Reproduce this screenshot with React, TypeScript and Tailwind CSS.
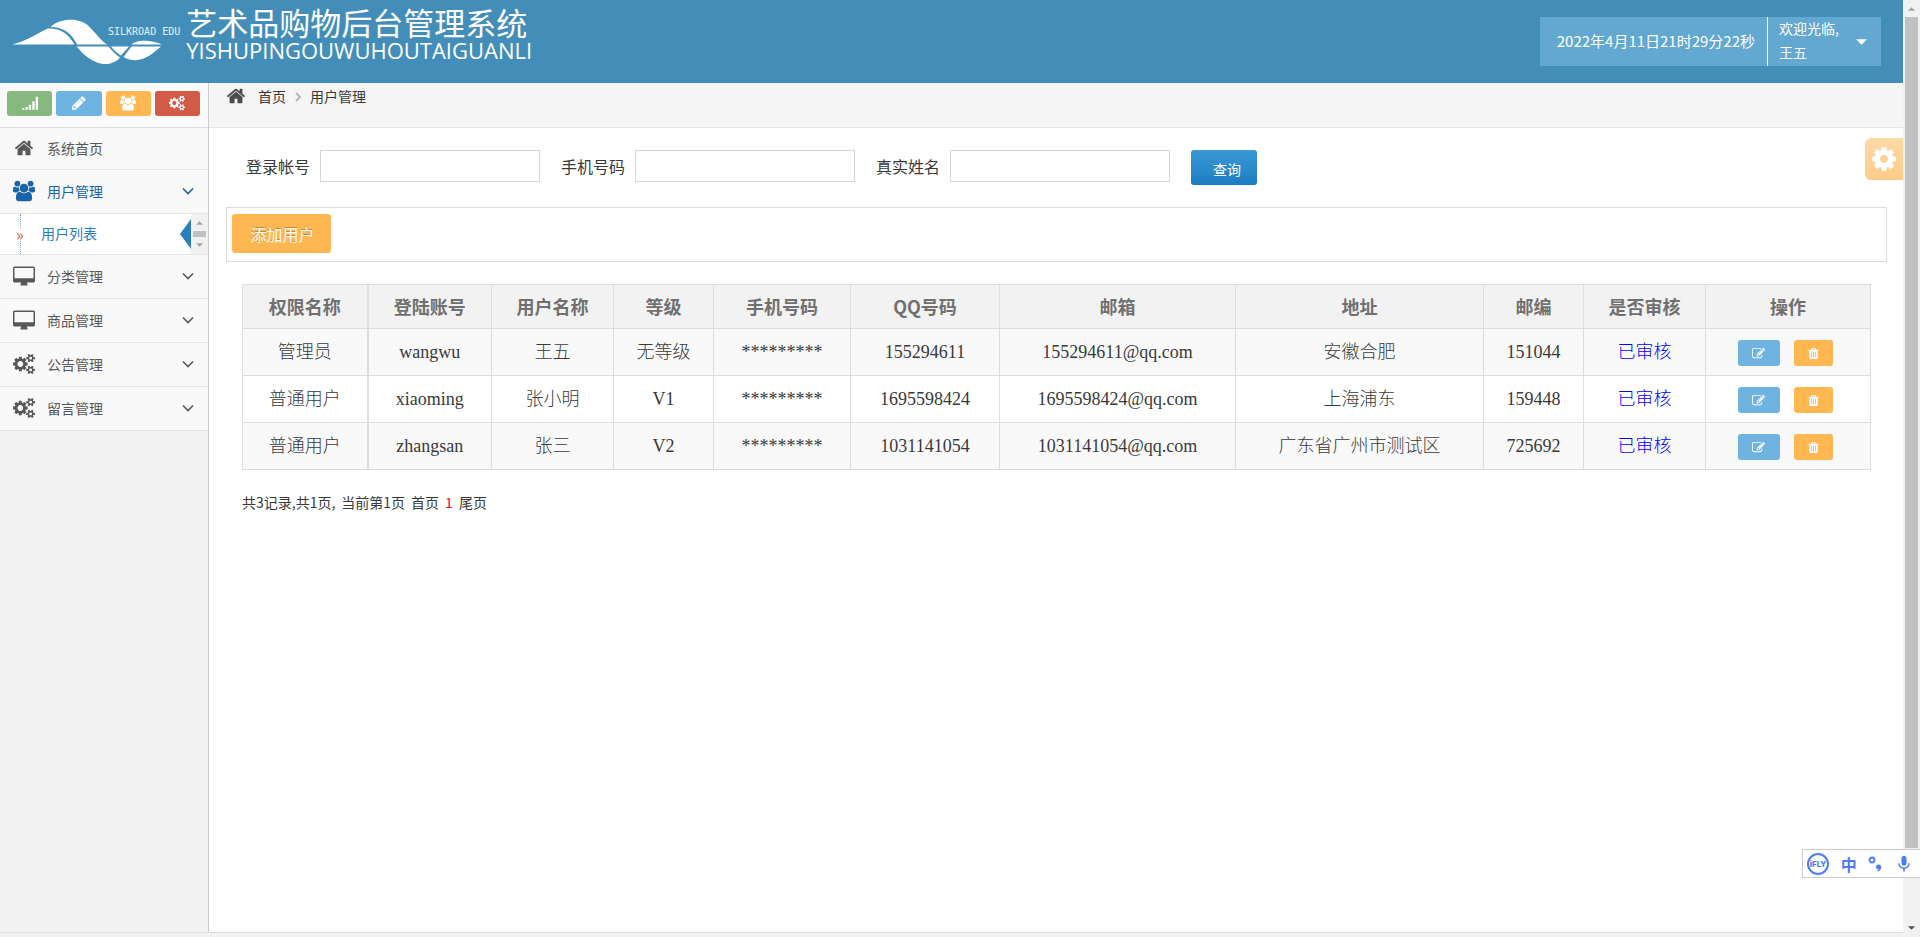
import React from 'react';
import { MdMic } from 'react-icons/md';

type IconProps = { className?: string };

const HOME_PATH = 'M1472 992v480q0 26-19 45t-45 19h-384v-384h-256v384h-384q-26 0-45-19t-19-45v-480q0-1 .5-3t.5-3l575-474 575 474q1 2 1 6zm223-69l-62 74q-8 9-21 11h-3q-13 0-21-7l-692-577-692 577q-12 8-24 7-13-2-21-11l-62-74q-8-10-7-23.5t11-21.5l719-599q32-26 76-26t76 26l244 204v-195q0-14 9-23t23-9h192q14 0 23 9t9 23v408l219 182q10 8 11 21.5t-7 23.5z';
const DESKTOP_PATH = 'M1792 992v-832q0-13-9.5-22.5t-22.5-9.5h-1600q-13 0-22.5 9.5t-9.5 22.5v832q0 13 9.5 22.5t22.5 9.5h1600q13 0 22.5-9.5t9.5-22.5zm128-832v1088q0 66-47 113t-113 47h-544q0 37 16 77.5t32 71 16 43.5q0 26-19 45t-45 19h-512q-26 0-45-19t-19-45q0-14 16-44t32-70 16-78h-544q-66 0-113-47t-47-113v-1088q0-66 47-113t113-47h1600q66 0 113 47t47 113z';
const GROUP_PATH = 'M593 896q-162 5-265 128h-134q-82 0-138-40.5t-56-118.5q0-353 124-353 6 0 43.5 21t97.5 42.5 119 21.5q67 0 133-23-5 37-5 66 0 139 81 256zm1071 637q0 120-73 189.5t-194 69.5h-874q-121 0-194-69.5t-73-189.5q0-53 3.5-103.5t14-109 26.5-108.5 43-97.5 62-81 85.5-53.5 111.5-20q10 0 43 21.5t73 48 107 48 135 21.5 135-21.5 107-48 73-48 43-21.5q61 0 111.5 20t85.5 53.5 62 81 43 97.5 26.5 108.5 14 109 3.5 103.5zm-1024-1277q0 106-75 181t-181 75-181-75-75-181 75-181 181-75 181 75 75 181zm704 384q0 159-112.5 271.5t-271.5 112.5-271.5-112.5-112.5-271.5 112.5-271.5 271.5-112.5 271.5 112.5 112.5 271.5zm576 225q0 78-56 118.5t-138 40.5h-134q-103-123-265-128 81-117 81-256 0-29-5-66 66 23 133 23 59 0 119-21.5t97.5-42.5 43.5-21q124 0 124 353zm-128-609q0 106-75 181t-181 75-181-75-75-181 75-181 181-75 181 75 75 181z';
const COGS_PATH = 'M896 896q0-106-75-181t-181-75-181 75-75 181 75 181 181 75 181-75 75-181zm768 512q0-52-38-90t-90-38-90 38-38 90q0 53 37.5 90.5t90.5 37.5 90.5-37.5 37.5-90.5zm0-1024q0-52-38-90t-90-38-90 38-38 90q0 53 37.5 90.5t90.5 37.5 90.5-37.5 37.5-90.5zm-384 421v185q0 10-7 19.5t-16 10.5l-155 24q-11 35-32 76 34 48 90 115 7 11 7 20 0 12-7 19-23 30-82.5 89.5t-78.5 59.5q-11 0-21-7l-115-90q-37 19-77 31-11 108-23 155-7 24-30 24h-186q-11 0-20-7.5t-10-17.5l-23-153q-34-10-75-31l-118 89q-7 7-20 7-11 0-21-8-144-133-144-160 0-9 7-19 10-14 41-53t47-61q-23-44-35-82l-152-24q-10-1-17-9.5t-7-19.5v-185q0-10 7-19.5t16-10.5l155-24q11-35 32-76-34-48-90-115-7-11-7-20 0-12 7-20 22-30 82-89t79-59q11 0 21 7l115 90q34-18 77-32 11-108 23-154 7-24 30-24h186q11 0 20 7.5t10 17.5l23 153q34 10 75 31l118-89q8-7 20-7 11 0 21 8 144 133 144 160 0 8-7 19-12 16-42 54t-45 60q23 48 34 82l152 23q10 2 17 10.5t7 19.5zm640 533v140q0 16-149 31-12 27-30 52 51 113 51 138 0 4-4 7-122 71-124 71-8 0-46-47t-52-68q-20 2-30 2t-30-2q-14 21-52 68t-46 47q-2 0-124-71-4-3-4-7 0-25 51-138-18-25-30-52-149-15-149-31v-140q0-16 149-31 13-29 30-52-51-113-51-138 0-4 4-7 4-2 35-20t59-34 30-16q8 0 46 46.5t52 67.5q20-2 30-2t30 2q51-71 92-112l6-2q4 0 124 70 4 3 4 7 0 25-51 138 17 23 30 52 149 15 149 31zm0-1024v140q0 16-149 31-12 27-30 52 51 113 51 138 0 4-4 7-122 71-124 71-8 0-46-47t-52-68q-20 2-30 2t-30-2q-14 21-52 68t-46 47q-2 0-124-71-4-3-4-7 0-25 51-138-18-25-30-52-149-15-149-31v-140q0-16 149-31 13-29 30-52-51-113-51-138 0-4 4-7 4-2 35-20t59-34 30-16q8 0 46 46.5t52 67.5q20-2 30-2t30 2q51-71 92-112l6-2q4 0 124 70 4 3 4 7 0 25-51 138 17 23 30 52 149 15 149 31z';
const COG_PATH = 'M1152 896q0-106-75-181t-181-75-181 75-75 181 75 181 181 75 181-75 75-181zm512-109v222q0 12-8 23t-20 13l-185 28q-19 54-39 91 35 50 107 138 10 12 10 25t-9 23q-27 37-99 108t-94 71q-12 0-26-9l-138-108q-44 23-91 38-16 136-29 186-7 28-36 28h-222q-14 0-24.5-8.5t-11.5-21.5l-28-184q-49-16-90-37l-141 107q-10 9-25 9-14 0-25-11-126-114-165-168-7-10-7-23 0-12 8-23 15-21 51-66.5t54-70.5q-27-50-41-99l-183-27q-13-2-21-12.5t-8-23.5v-222q0-12 8-23t19-13l186-28q14-46 39-92-40-57-107-138-10-12-10-24 0-10 9-23 26-36 98.5-107.5t94.5-71.5q13 0 26 10l138 107q44-23 91-38 16-136 29-186 7-28 36-28h222q14 0 24.5 8.5t11.5 21.5l28 184q49 16 90 37l142-107q9-9 24-9 13 0 25 10 129 119 165 170 7 8 7 22 0 12-8 23-15 21-51 66.5t-54 70.5q26 50 41 98l183 28q13 2 21 12.5t8 23.5z';
const PENCIL_PATH = 'M491 1536l91-91-235-235-91 91v107h128v128h107zm523-928q0-22-22-22-10 0-17 7l-542 542q-7 7-7 17 0 22 22 22 10 0 17-7l542-542q7-7 7-17zm-54-192l416 416-832 832h-416v-416zm683 96q0 53-37 90l-166 166-416-416 166-165q36-38 90-38 53 0 91 38l235 234q37 39 37 91z';
const EDIT_PATH = 'M888 1184l116-116-152-152-116 116v56h96v96h56zm440-720q-16-16-33 1l-350 350q-17 17-1 33t33-1l350-350q17-17 1-33zm80 594v190q0 119-84.5 203.5t-203.5 84.5h-832q-119 0-203.5-84.5t-84.5-203.5v-832q0-119 84.5-203.5t203.5-84.5h832q63 0 117 25 15 7 18 23 3 17-9 29l-49 49q-14 14-32 8-23-6-45-6h-832q-66 0-113 47t-47 113v832q0 66 47 113t113 47h832q66 0 113-47t47-113v-126q0-13 9-22l64-64q15-15 35-7t20 29zm-96-738l288 288-672 672h-288v-288zm444 132l-92 92-288-288 92-92q28-28 68-28t68 28l152 152q28 28 28 68t-28 68z';
const TRASH_PATH = 'M704 1376v-704q0-14-9-23t-23-9h-64q-14 0-23 9t-9 23v704q0 14 9 23t23 9h64q14 0 23-9t9-23zm256 0v-704q0-14-9-23t-23-9h-64q-14 0-23 9t-9 23v704q0 14 9 23t23 9h64q14 0 23-9t9-23zm256 0v-704q0-14-9-23t-23-9h-64q-14 0-23 9t-9 23v704q0 14 9 23t23 9h64q14 0 23-9t9-23zm-544-992h448l-48-117q-7-9-17-11h-317q-10 2-17 11zm928 32v64q0 14-9 23t-23 9h-96v948q0 83-47 143.5t-113 60.5h-832q-66 0-113-58.5t-47-141.5v-952h-96q-14 0-23-9t-9-23v-64q0-14 9-23t23-9h309l70-167q15-37 54-63t79-26h320q40 0 79 26t54 63l70 167h309q14 0 23 9t9 23z';
const SIGNAL_PATH = 'M0 1344h256v192h-256zM384 1216h256v320h-256zM768 960h256v576h-256zM1152 576h256v960h-256zM1536 64h256v1472h-256z';

const makeIcon = (d: string, viewBox = '0 0 1792 1792') => ({ className }: IconProps) => (
  <svg className={className} viewBox={viewBox} fill="currentColor" aria-hidden="true">
    <path d={d} />
  </svg>
);

const HomeIcon = makeIcon(HOME_PATH);
const DesktopIcon = makeIcon(DESKTOP_PATH, '0 0 1920 1664');
const GroupIcon = makeIcon(GROUP_PATH, '0 0 1920 1792');
const CogsIcon = makeIcon(COGS_PATH, '0 0 1920 1792');
const CogIcon = makeIcon(COG_PATH, '128 128 1536 1536');
const PencilIcon = makeIcon(PENCIL_PATH);
const EditIcon = makeIcon(EDIT_PATH);
const TrashIcon = makeIcon(TRASH_PATH);
const SignalIcon = makeIcon(SIGNAL_PATH, '0 0 1792 1536');

const ChevronDown = ({ className }: IconProps) => (
  <svg className={className} viewBox="0 0 12 8" fill="none" stroke="currentColor" strokeWidth="1.6" aria-hidden="true">
    <path d="M1 1.5l5 5 5-5" />
  </svg>
);

const Triangle = ({ className }: IconProps) => (
  <svg className={className} viewBox="0 0 8 4" fill="currentColor" aria-hidden="true">
    <path d="M0 4l4-4 4 4z" />
  </svg>
);

const shortcuts = [
  { label: '统计', icon: SignalIcon, color: 'bg-[#87b87f]' },
  { label: '编辑', icon: PencilIcon, color: 'bg-[#6fb3e0]' },
  { label: '用户', icon: GroupIcon, color: 'bg-[#ffb752]' },
  { label: '设置', icon: CogsIcon, color: 'bg-[#d15b47]' },
];

const menus = [
  { label: '分类管理', icon: DesktopIcon },
  { label: '商品管理', icon: DesktopIcon },
  { label: '公告管理', icon: CogsIcon },
  { label: '留言管理', icon: CogsIcon },
];

const columns = [
  { title: '权限名称', width: 'w-[125px]' },
  { title: '登陆账号', width: 'w-[124px]' },
  { title: '用户名称', width: 'w-[122px]' },
  { title: '等级', width: 'w-[100px]' },
  { title: '手机号码', width: 'w-[137px]' },
  { title: 'QQ号码', width: 'w-[149px]' },
  { title: '邮箱', width: 'w-[236px]' },
  { title: '地址', width: 'w-[248px]' },
  { title: '邮编', width: 'w-[100px]' },
  { title: '是否审核', width: 'w-[122px]' },
  { title: '操作', width: 'w-[165px]' },
];

const users = [
  ['管理员', 'wangwu', '王五', '无等级', '*********', '155294611', '155294611@qq.com', '安徽合肥', '151044'],
  ['普通用户', 'xiaoming', '张小明', 'V1', '*********', '1695598424', '1695598424@qq.com', '上海浦东', '159448'],
  ['普通用户', 'zhangsan', '张三', 'V2', '*********', '1031141054', '1031141054@qq.com', '广东省广州市测试区', '725692'],
];

const fields = [
  { id: 'account', label: '登录帐号' },
  { id: 'phone', label: '手机号码' },
  { id: 'realname', label: '真实姓名' },
];

const Header = () => (
  <header className="flex h-[83px] items-center justify-between bg-[#438eb9] pr-[22px] text-white">
    <a href="#" className="flex h-full items-start">
      <svg className="mt-[18px] ml-3 h-[48px] w-[152px]" viewBox="0 0 152 48" fill="#fff" aria-hidden="true">
        <path d="M0 26.5C15 23 24 16 36 10.500C48 10 56 15 62.500 26.500Z" />
        <path d="M38.500 9C48 0 68 -1 77 8.500C84 15 88 22 95 26.500H65C60 16 52 9 38.500 9Z" />
        <path d="M64.500 28.500H96.500C100 33 104 37 108 39.500C103 46 92 48 84 44C75 40 70 35 64.500 28.500Z" />
        <path d="M99 28.500H117L109 37.500C105 35 101 31.500 99 28.500Z" />
        <path d="M119.500 26.500C124 22 138 21 150 26.500Z" />
        <path d="M119.500 28.500H149C140 36 128 48 111.500 39Z" />
      </svg>
      <span className="-ml-14 mt-6 whitespace-nowrap font-['DejaVu_Sans_Mono',monospace] text-[10px] leading-4 text-white/85">SILKROAD EDU</span>
      <span className="ml-1.5 mt-2 flex flex-col whitespace-nowrap">
        <span className="font-['Liberation_Sans','Noto_Sans_CJK_SC',sans-serif] text-[31px] leading-[34px]">艺术品购物后台管理系统</span>
        <span className="font-['Open_Sans',sans-serif] text-[22px] leading-4">YISHUPINGOUWUHOUTAIGUANLI</span>
      </span>
    </a>
    <div className="flex h-[49px] bg-[#62a8d1]">
      <div className="flex items-center border-r border-white pr-3 pl-[17px] text-[15px]">2022年4月11日21时29分22秒</div>
      <button type="button" className="flex w-[113px] items-center justify-between pr-3.5 pl-[11px] text-left">
        <span className="pb-1 text-sm leading-6">欢迎光临,<br />王五</span>
        <Triangle className="h-1.5 w-[11px] rotate-180" />
      </button>
    </div>
  </header>
);

const Sidebar = () => (
  <aside className="w-[209px] shrink-0 border-r border-[#ccc] bg-[#f2f2f2] text-[#585858]">
    <div className="flex h-[45px] items-center gap-1 border-b border-[#ddd] bg-[#fafafa] pr-2 pb-1 pl-[7px]">
      {shortcuts.map(({ label, icon: Icon, color }) => (
        <button key={label} type="button" aria-label={label} className={`flex h-[25px] flex-1 items-center justify-center rounded-[3px] text-white ${color}`}>
          <Icon className="h-4 w-4" />
        </button>
      ))}
    </div>
    <nav className="text-sm">
      <a href="#" className="flex h-[42px] items-center border-b border-[#e5e5e5] bg-[#f9f9f9] pb-0.5 pl-3.5">
        <HomeIcon className="h-5 w-5" />
        <span className="ml-[13px]">系统首页</span>
      </a>
      <a href="#" className="flex h-[44px] items-center border-b border-[#e5e5e5] bg-[#f9f9f9] pr-3.5 pb-0.5 pl-[13px] text-[#1963aa]">
        <GroupIcon className="h-[22px] w-[22px]" />
        <span className="ml-3 flex-1">用户管理</span>
        <ChevronDown className="h-2 w-3" />
      </a>
      <div className="flex h-[41px] border-b border-[#e5e5e5] bg-white">
        <a href="#" className="relative flex flex-1 items-center pl-4 text-[#2b7dbc]">
          <span className="absolute inset-y-0 left-5 border-l border-dotted border-[#7fa8cc]" />
          <span className="relative w-[25px]">
            <span className="block w-[9px] bg-white text-base leading-3 text-[#c86139]">»</span>
          </span>
          <span className="flex-1 pb-0.5">用户列表</span>
          <svg className="h-[30px] w-[11px]" viewBox="0 0 11 30" aria-hidden="true">
            <path d="M11 0v30L0 15z" fill="#2b7dbc" />
          </svg>
        </a>
        <div className="flex w-[17px] flex-col items-center justify-between bg-[#f1f1f1] py-[7px] text-[#a3a3a3]">
          <Triangle className="h-1 w-[7px]" />
          <span className="h-1.5 w-[13px] bg-[#c1c1c1]" />
          <Triangle className="h-1 w-[7px] rotate-180" />
        </div>
      </div>
      {menus.map(({ label, icon: Icon }) => (
        <a key={label} href="#" className="flex h-[44px] items-center border-b border-[#e5e5e5] bg-[#f9f9f9] pr-3.5 pb-0.5 pl-[13px]">
          <Icon className="h-[22px] w-[22px]" />
          <span className="ml-3 flex-1">{label}</span>
          <ChevronDown className="h-2 w-3" />
        </a>
      ))}
    </nav>
  </aside>
);

const UserTable = () => (
  <table className="w-full table-fixed border-collapse text-center text-lg">
    <colgroup>
      {columns.map((c) => (
        <col key={c.title} className={c.width} />
      ))}
    </colgroup>
    <thead>
      <tr className="h-[44px] bg-[#f2f2f2] text-[#707070]">
        {columns.map((c) => (
          <th key={c.title} className="border border-[#ddd] pb-0.5 font-bold first:border-r-2">{c.title}</th>
        ))}
      </tr>
    </thead>
    <tbody className="font-['Liberation_Serif','Noto_Sans_CJK_SC',serif] font-light text-[#393939]">
      {users.map((row) => (
        <tr key={row[1]} className="h-[47px] odd:bg-[#f9f9f9]">
          {row.map((cell, i) => (
            <td key={i} className="border border-[#ddd] leading-7 first:border-r-2">{cell}</td>
          ))}
          <td className="border border-[#ddd] leading-7 text-[#0000ff]">已审核</td>
          <td className="border border-[#ddd]">
            <div className="flex justify-center gap-3.5 pt-0.5 pr-1.5 text-white">
              <button type="button" aria-label="编辑" className="flex h-[26px] w-[42px] items-center justify-center rounded-[3px] bg-[#6fb3e0]">
                <EditIcon className="h-[13px] w-[13px]" />
              </button>
              <button type="button" aria-label="删除" className="flex h-[26px] w-[39px] items-center justify-center rounded-[3px] bg-[#ffb752]">
                <TrashIcon className="h-[13px] w-[13px]" />
              </button>
            </div>
          </td>
        </tr>
      ))}
    </tbody>
  </table>
);

const Content = () => (
  <main className="min-w-0 flex-1 bg-white text-[#393939]">
    <div className="flex h-[45px] items-start border-b border-[#e5e5e5] bg-[#f5f5f5] pt-[3px] pl-[17px] text-sm leading-5">
      <HomeIcon className="h-5 w-5 text-[#4c4c4c]" />
      <a href="#" className="ml-3">首页</a>
      <svg className="mx-2 h-5 w-2" viewBox="0 0 8 20" fill="none" stroke="#b2b6bf" strokeWidth="2" aria-hidden="true">
        <path d="M2 7l4 4-4 4" />
      </svg>
      <span>用户管理</span>
    </div>

    <div className="pt-[22px] pr-4 pl-[17px]">
      <form className="flex items-start pl-5">
        {fields.map((f) => (
          <div key={f.id} className="mr-[21px] flex items-center">
            <label htmlFor={f.id} className="mr-2.5 text-base">{f.label}</label>
            <input id={f.id} type="text" className="h-8 w-[220px] border border-[#d5d5d5] bg-white px-1.5 text-sm outline-none" />
          </div>
        ))}
        <button type="button" className="h-[35px] w-[66px] rounded-[3px] bg-linear-to-b from-[#3b98d6] to-[#197ec1] pt-0.5 pl-1.5 text-sm text-white">查询</button>
      </form>

      <div className="mt-[22px] h-[55px] border border-[#ddd] px-[5px] py-1.5">
        <button type="button" className="h-[39px] w-[99px] rounded-[3px] bg-[#ffb752] pl-0.5 text-base text-white text-shadow-[0_-1px_0_rgba(0,0,0,0.25)]">添加用户</button>
      </div>

      <div className="pt-[22px] pr-[17px] pl-4">
        <UserTable />
        <p className="mt-[22px] flex gap-1.5 text-sm leading-5">
          <span>共3记录,共1页,</span>
          <span>当前第1页</span>
          <a href="#">首页</a>
          <span className="text-[#ff0033]">1</span>
          <a href="#">尾页</a>
        </p>
      </div>
    </div>
  </main>
);

const Scrollbar = () => (
  <div className="flex w-[17px] shrink-0 flex-col items-center bg-[#f1f1f1] py-[7px]">
    <Triangle className="h-1 w-[7px] text-[#a3a3a3]" />
    <span className="mt-1.5 mb-[78px] w-[13px] flex-1 bg-[#c1c1c1]" />
    <Triangle className="h-1 w-[7px] rotate-180 text-[#505050]" />
  </div>
);

const ImeBar = () => (
  <div className="absolute right-0 bottom-[59px] flex h-[29px] w-[118px] items-center justify-between border border-r-0 border-[#ccc] bg-white pr-1.5 pl-1 text-[#4c7cf6]">
    <span className="flex h-[22px] w-[22px] items-center justify-center rounded-full border-2 border-[#4c7cf6] font-['Inter',sans-serif] text-[8px] leading-none font-extrabold">iFLY</span>
    <span className="text-base leading-4 font-bold">中</span>
    <svg className="h-4 w-3.5" viewBox="0 0 14 16" aria-hidden="true">
      <circle cx="4" cy="4" r="2.5" fill="none" stroke="currentColor" strokeWidth="1.8" />
      <path d="M8 11a2.6 2.6 0 1 1 5.200 0c0 2.400-1.500 4-3.700 4.600l-.4-.9c1-.4 1.600-.8 1.700-1.400C9.200 13.500 8 12.600 8 11z" fill="currentColor" />
    </svg>
    <MdMic className="h-5 w-5" />
  </div>
);

function App() {
  return (
    <div className="relative flex min-h-screen font-['Noto_Sans_CJK_SC',sans-serif]">
      <div className="flex min-w-0 flex-1 flex-col">
        <Header />
        <div className="flex flex-1">
          <Sidebar />
          <Content />
        </div>
        <div className="h-[5px] border-t border-[#ddd] bg-[#f2f2f2]" />
      </div>
      <Scrollbar />

      {/* floating settings tab */}
      <button type="button" aria-label="设置" className="absolute top-[138px] right-[17px] flex h-[42px] w-[38px] items-center justify-center rounded-l-md bg-linear-to-b from-[#ffd9a8] to-[#ffcc88] text-white">
        <CogIcon className="h-6 w-6" />
      </button>
      <ImeBar />
    </div>
  );
}

export default App;
